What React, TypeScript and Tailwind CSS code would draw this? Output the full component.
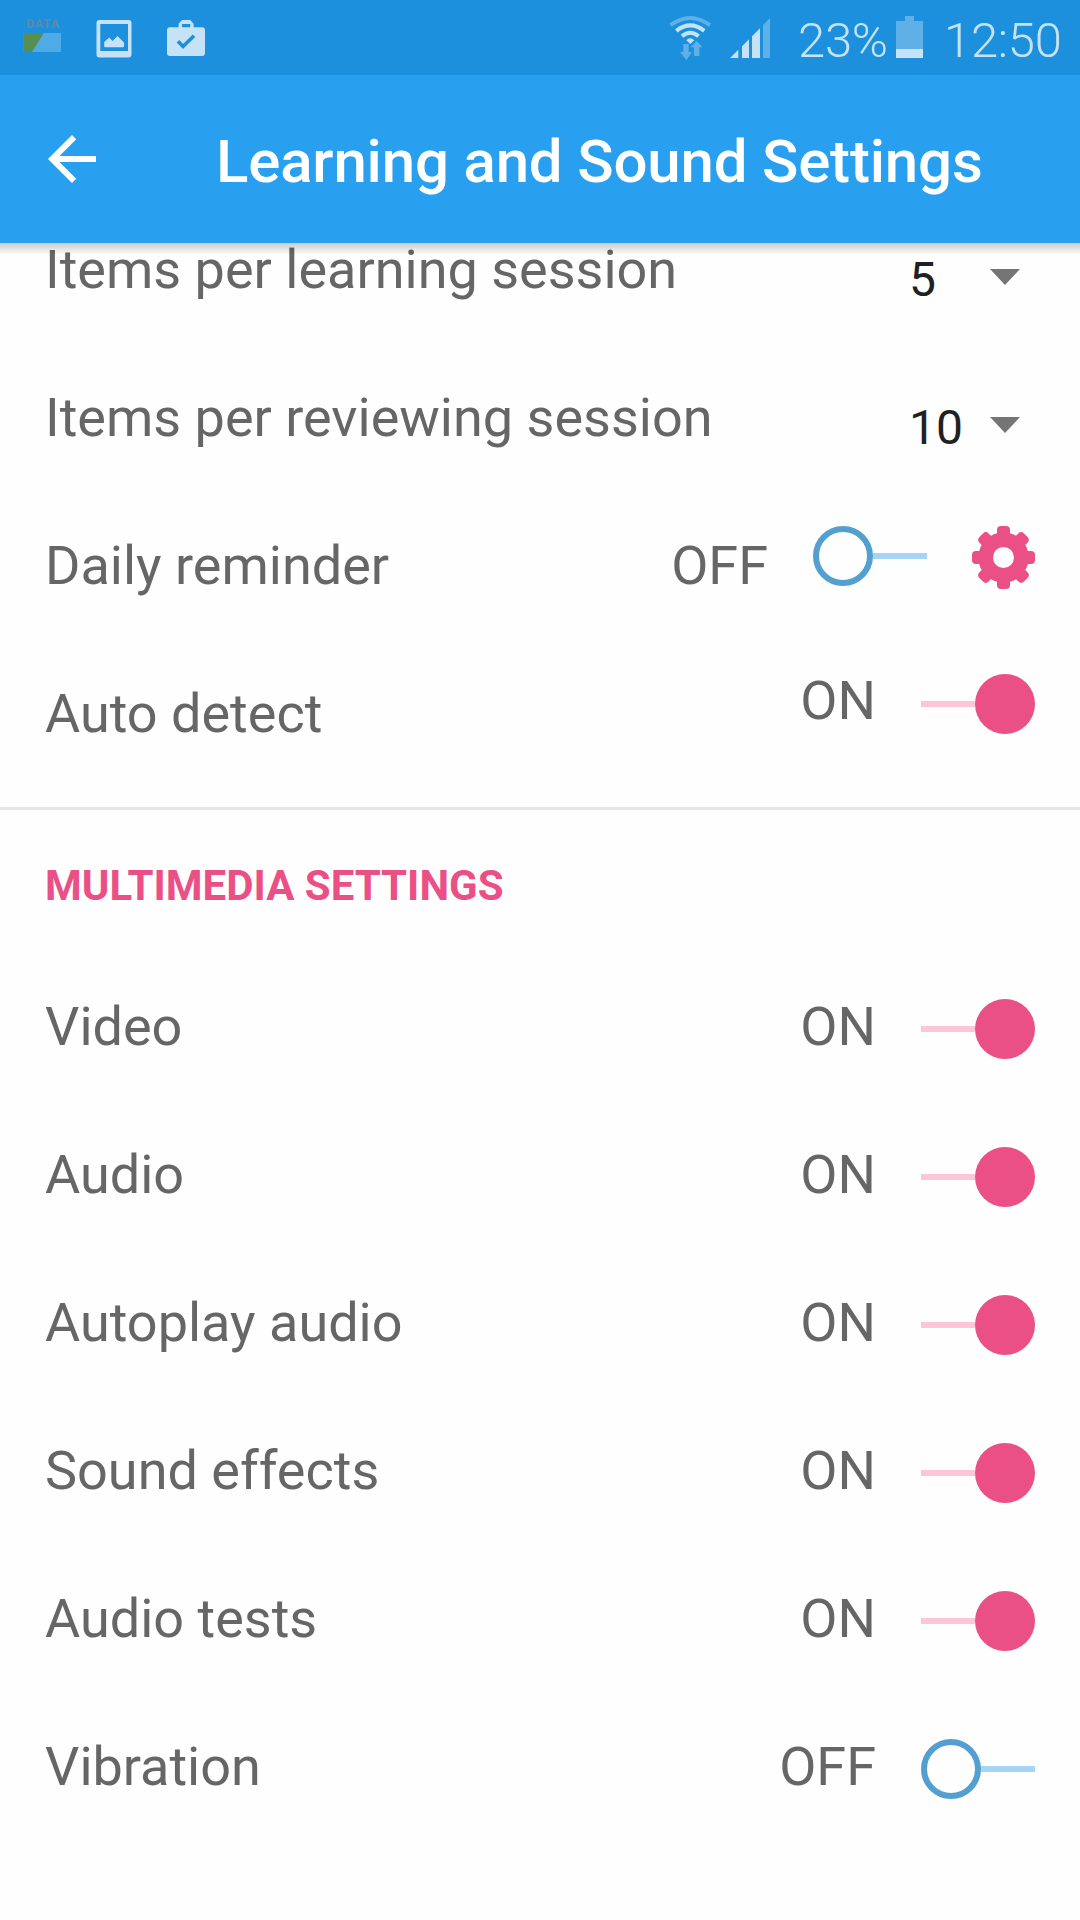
import type { ReactNode } from 'react';
import clsx from 'clsx';

const DataIcon = () => (
  <svg className="w-[38px] h-[36px]" viewBox="23 18 38 36">
    <text x="26" y="27.5" fontSize="12" fontWeight="700" fontFamily="Roboto, sans-serif" textLength="33" fill="#6189a5">
      DATA
    </text>
    <path d="M23.3 33H61v19H23.3z" fill="#4fabe5" />
    <path d="M23.3 33H44L32 52h-8.7z" fill="#568f50" />
  </svg>
);

const PictureIcon = () => (
  <svg className="w-[36px] h-[38px]" viewBox="96 20 36 38" fill="#c5e2f6">
    <path
      fillRule="evenodd"
      d="M99.5 20h29a3 3 0 0 1 3 3v31.500a3 3 0 0 1-3 3h-29a3 3 0 0 1-3-3V23a3 3 0 0 1 3-3zM100.300 24v27H128V24z"
    />
    <path d="M104.200 42l5-4.500 3.300 3.500 5-5 6.500 6.500v3.500a1.200 1.200 0 0 1-1.200 1.200h-17.400a1.200 1.200 0 0 1-1.200-1.200z" />
  </svg>
);

const BagIcon = () => (
  <svg className="w-[38px] h-[38px]" viewBox="167 19 38 38">
    <path
      fill="#c5e2f6"
      fillRule="evenodd"
      d="M170 27.300h8.600v-3.600l3.500-3.700h8l3.500 3.700v3.600h8.400a3 3 0 0 1 3 3V53a3 3 0 0 1-3 3h-32a3 3 0 0 1-3-3V30.300a3 3 0 0 1 3-3zM182 24v3.300h8.200V24z"
    />
    <path d="M178 41.300l5 5.200 11-10.700" fill="none" stroke="#1c90dc" strokeWidth="3.600" />
  </svg>
);

const WifiIcon = () => (
  <svg className="w-[42px] h-[46px]" viewBox="669 15 42 46">
    <g fill="none" strokeWidth="4">
      <path d="M670.500 25.200Q690.300 10.800 710 25.200" stroke="#5eb0e6" />
      <g stroke="#c5e2f6">
        <path d="M676.300 30.800Q690.300 20 704.300 30.800" />
        <path d="M682 36.300Q690.300 29.300 698.600 36.300" />
      </g>
    </g>
    <path d="M686.300 40.300q4-4 8 0l-4 3.800z" fill="#c5e2f6" />
    <path d="M683.300 44h5.400v8h3.300l-5.700 8-6.300-8h3.300zM694 56V47.300h-3.300l6-6.300 6 6.300h-3.300V56z" fill="#5eb0e6" />
  </svg>
);

const SignalIcon = () => (
  <svg className="w-[40px] h-[40px]" viewBox="730 18 40 40">
    <path d="M730 58l8.300-8.300V58zM742 58V46.300l7-7V58zM752 58V36.300l8-8V58z" fill="#c5e2f6" />
    <path d="M763 58V25l7-7v40z" fill="#5eb0e6" />
  </svg>
);

const BatteryIcon = () => (
  <svg className="w-[27px] h-[42px]" viewBox="896 16 27 42">
    <path d="M905 16h9v5h9v28h-27V21h9z" fill="#5eb0e6" />
    <path d="M896 49h27v9h-27z" fill="#c5e2f6" />
  </svg>
);

const BackIcon = () => (
  <svg className="w-[72px] h-[72px]" viewBox="0 0 24 24" fill="#fff">
    <path d="M20 11H7.830l5.590-5.590L12 4l-8 8 8 8 1.410-1.410L7.830 13H20z" />
  </svg>
);

const GearIcon = () => (
  <svg className="w-[63px] h-[63px]" viewBox="-31.5 -31.5 63 63" fill="#ea5085">
    {[0, 45, 90, 135].map((angle) => (
      <rect key={angle} x="-6.5" y="-31.5" width="13" height="63" rx="4" transform={`rotate(${angle})`} />
    ))}
    <circle r="25.200" />
    <circle r="10.500" fill="#fefefe" />
  </svg>
);

const Toggle = ({ on }: { on: boolean }) =>
  on ? (
    <div className="flex items-center w-[114px]">
      <div className="w-[54px] h-[6px] bg-[#fcc5d8]" />
      <div className="size-[60px] rounded-full bg-[#ea5085]" />
    </div>
  ) : (
    <div className="flex items-center w-[114px]">
      <div className="size-[60px] rounded-full border-6 border-[#529fd0]" />
      <div className="w-[54px] h-[6px] bg-[#a5d5f3]" />
    </div>
  );

const Row = ({ label, first, children }: { label: string; first?: boolean; children: ReactNode }) => (
  <div className={clsx('flex items-center justify-between px-[45px]', first ? 'h-[101px] pb-[47px]' : 'h-[148px]')}>
    <span>{label}</span>
    {children}
  </div>
);

const SelectValue = ({ value }: { value: string }) => (
  <div className="flex items-center w-[126px] justify-between pr-[15px]">
    <span className="text-[48px] text-[#212121] mt-[20px]">{value}</span>
    <svg className="w-[30px] h-[16px] mt-[14px]" viewBox="0 0 30 16" fill="#757575">
      <path d="M0 0h30L15 16z" />
    </svg>
  </div>
);

const multimedia = [
  { label: 'Video', on: true },
  { label: 'Audio', on: true },
  { label: 'Autoplay audio', on: true },
  { label: 'Sound effects', on: true },
  { label: 'Audio tests', on: true },
  { label: 'Vibration', on: false },
];

export default function App() {
  return (
    <div className="flex flex-col w-[1080px] h-[1920px] overflow-hidden bg-[#fefefe] font-[Roboto,sans-serif] leading-none whitespace-nowrap">
      <div className="flex justify-between shrink-0 h-[75px] bg-[#1c90dc] text-[#c5e2f6] text-[49px] font-[350]">
        <div className="flex pl-[23px]">
          <div className="pt-[18px]">
            <DataIcon />
          </div>
          <div className="pt-[20px] pl-[35px]">
            <PictureIcon />
          </div>
          <div className="pt-[19px] pl-[35px]">
            <BagIcon />
          </div>
        </div>
        <div className="flex">
          <div className="pt-[15px] w-[61px]">
            <WifiIcon />
          </div>
          <div className="pt-[18px] w-[68px]">
            <SignalIcon />
          </div>
          <span className="pt-[16px] w-[98px] tracking-[-0.3px]">23%</span>
          <div className="pt-[16px] w-[48px]">
            <BatteryIcon />
          </div>
          <span className="pt-[16px] w-[136px] tracking-[-0.3px]">12:50</span>
        </div>
      </div>

      <header className="flex items-center shrink-0 h-[168px] pl-[36px] bg-[#289fef] text-white">
        <BackIcon />
        <h1 className="pl-[108px] pt-[5px] text-[60px] font-medium tracking-[-0.18px]">Learning and Sound Settings</h1>
      </header>

      <main className="relative flex-1 text-[54px] text-[#666666]">
        <div className="absolute inset-x-0 top-0 h-[12px] bg-linear-to-b from-black/20 to-transparent" />

        <section className="pb-[19px] border-b-3 border-[#e5e5e5]">
          <Row label="Items per learning session" first>
            <SelectValue value="5" />
          </Row>
          <Row label="Items per reviewing session">
            <SelectValue value="10" />
          </Row>
          <Row label="Daily reminder">
            <div className="flex items-center gap-[45px]">
              <span>OFF</span>
              <div className="mb-[20px]">
                <Toggle on={false} />
              </div>
              <div className="mb-[17px]">
                <GearIcon />
              </div>
            </div>
          </Row>
          <Row label="Auto detect">
            <div className="flex items-center gap-[45px]">
              <span className="mb-[26px]">ON</span>
              <div className="mb-[20px]">
                <Toggle on />
              </div>
            </div>
          </Row>
        </section>

        <section>
          <h2 className="h-[143px] px-[45px] pt-[55px] text-[42px] font-bold text-[#ea5085]">MULTIMEDIA SETTINGS</h2>
          {multimedia.map(({ label, on }) => (
            <Row key={label} label={label}>
              <div className="flex items-center gap-[45px]">
                <span>{on ? 'ON' : 'OFF'}</span>
                <div className="mt-[4px]">
                  <Toggle on={on} />
                </div>
              </div>
            </Row>
          ))}
        </section>
      </main>
    </div>
  );
}
